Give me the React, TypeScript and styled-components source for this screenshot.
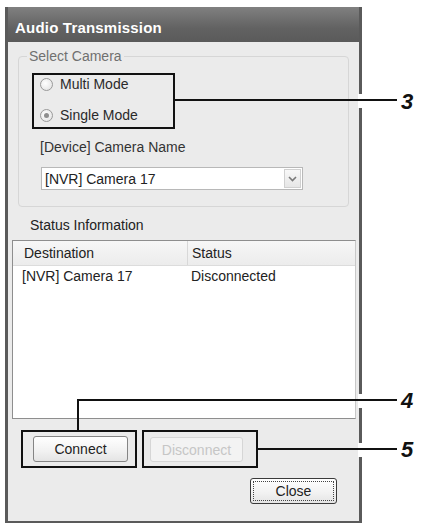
import styled, { createGlobalStyle, css } from "styled-components"

const GlobalStyle = createGlobalStyle`
  html, body {
    margin: 0;
    padding: 0;
    background: #ffffff;
  }
  body {
    font-family: "Liberation Sans", Arial, sans-serif;
    color: #222;
  }
`

const Page = styled.div`
  position: relative;
  width: 426px;
  height: 523px;
  padding: 7px 0 0 5px;
  box-sizing: border-box;
  overflow: hidden;
`

const Window = styled.div`
  width: 357px;
  height: 516px;
  box-sizing: border-box;
  border-left: 3px solid #5a5a5a;
  border-right: 3px solid #5a5a5a;
  border-bottom: 2px solid #5a5a5a;
  background: #ebebeb;
  display: flex;
  flex-direction: column;
`

const TitleBar = styled.div`
  height: 35px;
  box-sizing: border-box;
  padding: 5px 0 0 7px;
  display: flex;
  align-items: center;
  background: linear-gradient(#808080, #626262 60%, #5a5a5a);
  color: #fff;
  font-weight: bold;
  font-size: 15px;
  letter-spacing: 0.2px;
`

const GroupBox = styled.fieldset`
  margin: 6px 10px 0 10px;
  padding: 0 0 16px 0;
  min-width: 0;
  border: 1px solid #d6d6d6;
  border-radius: 4px;
`

const Legend = styled.legend`
  margin-left: 8px;
  padding: 0 2px;
  font-size: 14px;
  line-height: 16px;
  color: #707070;
`

// heavy black frame that groups the controls a callout points at
const Marked = styled.div<{ $w: number; $pad: string }>`
  width: ${(p) => p.$w}px;
  box-sizing: border-box;
  border: 2px solid #111;
  padding: ${(p) => p.$pad};
`

const RadioGroup = styled(Marked)`
  margin: 9px 0 0 13px;
  display: flex;
  flex-direction: column;
  gap: 13px;
`

const RadioRow = styled.label`
  height: 18px;
  display: flex;
  align-items: center;
  gap: 7px;
  font-size: 14px;
  color: #2a2a2a;
`

const RadioDot = styled.span<{ $on?: boolean }>`
  position: relative;
  width: 13px;
  height: 13px;
  box-sizing: border-box;
  border-radius: 50%;
  border: 1px solid #9a9a9a;
  background: radial-gradient(circle at 40% 40%, #ffffff, #dedede);
  ${(p) =>
    p.$on &&
    css`
      &::after {
        content: "";
        position: absolute;
        left: 3px;
        top: 3px;
        width: 5px;
        height: 5px;
        border-radius: 50%;
        background: #8e8e8e;
      }
    `}
`

const FieldLabel = styled.div`
  margin: 10px 0 0 21px;
  font-size: 14px;
  line-height: 16px;
  color: #333;
`

const Select = styled.div`
  margin: 12px 0 0 22px;
  width: 262px;
  height: 23px;
  box-sizing: border-box;
  border: 1px solid #b8b8b8;
  background: #fff;
  display: flex;
  align-items: center;
  justify-content: space-between;
  padding-left: 3px;
  font-size: 14px;
  color: #222;
`

const DropButton = styled.span`
  width: 17px;
  height: 19px;
  margin-right: 1px;
  box-sizing: border-box;
  border: 1px solid #d0d0d0;
  background: linear-gradient(#f8f8f8, #e6e6e6);
  display: flex;
  align-items: center;
  justify-content: center;
`

const SectionLabel = styled.div`
  margin: 10px 0 0 22px;
  font-size: 14px;
  line-height: 16px;
  color: #222;
`

const ListView = styled.div`
  margin: 7px 3px 0 4px;
  height: 179px;
  box-sizing: border-box;
  border: 1px solid #8e8e8e;
  border-right-color: #c8c8c8;
  background: #fff;
`

const ListRow = styled.div<{ $head?: boolean }>`
  display: grid;
  grid-template-columns: 174px 1fr;
  align-items: center;
  font-size: 14px;
  color: #222;
  ${(p) =>
    p.$head
      ? css`
          height: 24px;
          background: linear-gradient(#f7f7f7, #ececec);
          border-bottom: 1px solid #dcdcdc;
        `
      : css`
          height: 19px;
        `}
`

const Cell = styled.span<{ $head?: boolean; $first?: boolean }>`
  padding-left: ${(p) => (p.$first ? (p.$head ? 11 : 9) : 4)}px;
  ${(p) =>
    p.$head &&
    !p.$first &&
    css`
      border-left: 1px solid #d8d8d8;
      height: 100%;
      display: flex;
      align-items: center;
    `}
`

const ButtonRow = styled.div`
  margin: 11px 0 0 13px;
  display: flex;
  gap: 5px;
`

const Button = styled.button<{ $w: number; $h?: number; $default?: boolean }>`
  width: ${(p) => p.$w}px;
  height: ${(p) => p.$h ?? 26}px;
  box-sizing: border-box;
  padding: 0;
  border: 1px solid #858585;
  border-radius: 3px;
  background: linear-gradient(#ffffff, #f1f1f1 60%, #e4e4e4);
  font-family: "Liberation Sans", Arial, sans-serif;
  font-size: 14px;
  color: #222;
  &:disabled {
    border-color: #d6d6d6;
    background: #f3f3f3;
    color: #c6c6c6;
  }
  ${(p) =>
    p.$default &&
    css`
      border-color: #3a3a3a;
      outline: 1px dotted #444;
      outline-offset: -4px;
    `}
`

const CloseRow = styled.div`
  margin-top: 10px;
  padding-right: 22px;
  display: flex;
  justify-content: flex-end;
`

// callout leader lines and step numbers drawn over the dialog
const Line = styled.div<{ $x: number; $y: number; $w: number; $h: number }>`
  position: absolute;
  left: ${(p) => p.$x}px;
  top: ${(p) => p.$y}px;
  width: ${(p) => p.$w}px;
  height: ${(p) => p.$h}px;
  background: #111;
`

// white break in the window frame where a leader line crosses it
const FrameBreak = styled.div<{ $y: number }>`
  position: absolute;
  left: 358px;
  top: ${(p) => p.$y - 6}px;
  width: 5px;
  height: 14px;
  background: #fff;
`

const StepNo = styled.div<{ $y: number }>`
  position: absolute;
  left: 401px;
  top: ${(p) => p.$y}px;
  font-size: 22px;
  line-height: 22px;
  font-weight: bold;
  font-style: italic;
  color: #111;
`

function Chevron() {
  return (
    <svg width="9" height="6" viewBox="0 0 9 6">
      <path d="M1 1 L4.5 4.5 L8 1" fill="none" stroke="#7a7a7a" strokeWidth="1.6" />
    </svg>
  )
}

export default function App() {
  return (
    <Page>
      <GlobalStyle />
      <Window>
        <TitleBar>Audio Transmission</TitleBar>

        <GroupBox>
          <Legend>Select Camera</Legend>
          <RadioGroup $w={143} $pad="0 0 3px 6px">
            <RadioRow>
              <RadioDot />
              Multi Mode
            </RadioRow>
            <RadioRow>
              <RadioDot $on />
              Single Mode
            </RadioRow>
          </RadioGroup>
          <FieldLabel>[Device] Camera Name</FieldLabel>
          <Select>
            [NVR] Camera 17
            <DropButton>
              <Chevron />
            </DropButton>
          </Select>
        </GroupBox>

        <SectionLabel>Status Information</SectionLabel>
        <ListView>
          <ListRow $head>
            <Cell $head $first>Destination</Cell>
            <Cell $head>Status</Cell>
          </ListRow>
          <ListRow>
            <Cell $first>[NVR] Camera 17</Cell>
            <Cell>Disconnected</Cell>
          </ListRow>
        </ListView>

        <ButtonRow>
          <Marked $w={116} $pad="4px 0 4px 10px">
            <Button $w={95}>Connect</Button>
          </Marked>
          <Marked $w={116} $pad="5px 0 4px 6px">
            <Button $w={93} $h={25} disabled>
              Disconnect
            </Button>
          </Marked>
        </ButtonRow>

        <CloseRow>
          <Button $w={87} $default>
            Close
          </Button>
        </CloseRow>
      </Window>

      <FrameBreak $y={100} />
      <Line $x={175} $y={99} $w={222} $h={2} />
      <StepNo $y={91}>3</StepNo>

      <FrameBreak $y={400} />
      <Line $x={77} $y={399} $w={2} $h={33} />
      <Line $x={77} $y={399} $w={320} $h={2} />
      <StepNo $y={390}>4</StepNo>

      <FrameBreak $y={449} />
      <Line $x={258} $y={448} $w={139} $h={2} />
      <StepNo $y={439}>5</StepNo>
    </Page>
  )
}
